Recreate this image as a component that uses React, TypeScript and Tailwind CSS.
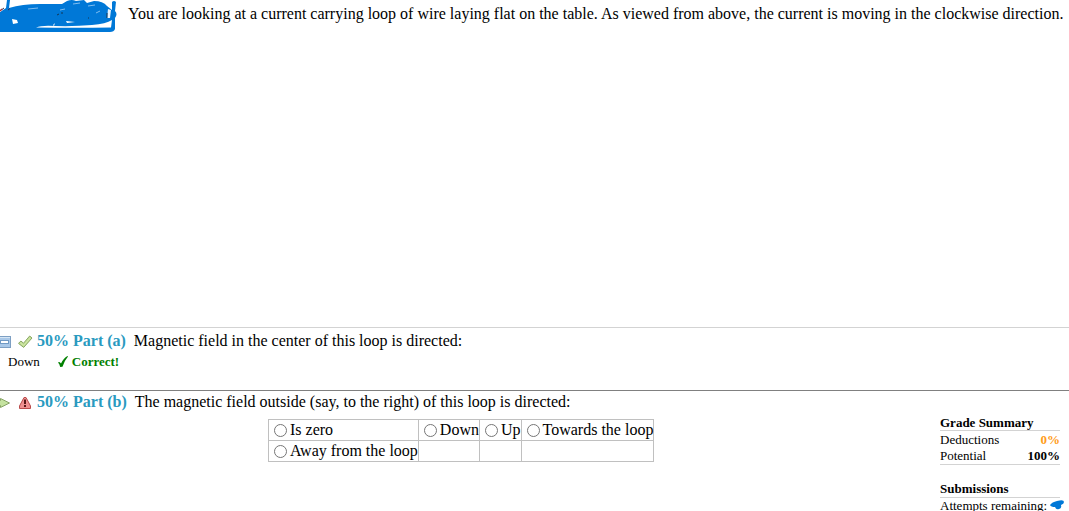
import type { ReactNode } from "react";

function Scribble() {
  return (
    <svg className="block shrink-0" width="120" height="34" viewBox="0 0 120 34" aria-hidden="true">
      <path
        d="M0 12 L6 8 L7 0 H10 L9 8 Q22 4 40 4 L62 4 L67 1 Q72 -1 76 1 L84 0 L87 3 L94 1 Q103 1 107 6 L112 10 L112 2 Q114 0 116 2 L115 11 Q118 14 115 18 L115 29 Q114 32 110 32 H0 Z"
        fill="#0078d7"
      />
      <path d="M0 7 L5 4 L5 8 L0 12Z" fill="#fff" />
      <path d="M0 11 L2 9" stroke="#b03030" strokeWidth="1.5" />
      <path d="M2 9.5 L4 8 M8 10 L10 8.5" stroke="#37304d" strokeWidth="1" />
      <path d="M12 19 L17 20 L18 23 L13 24Z M66 21 L75 22 L67 23Z M53 25 L55 23 L54 26Z" fill="#fff" />
      <path d="M36 27.5 Q42 25 55 26 Q76 26.5 92 25 Q106 24 112 20 L111 27.5 Q74 28 36 27.5Z" fill="#fff" />
      <path d="M28 9 L38 8 M73 4 L80 3 M88 6 L95 5 M60 10 L65 9 M96 13 L100 11" stroke="#7fbdf0" strokeWidth="1" />
      <path d="M108 9 L111 10 L110 18 L107 18Z" fill="#e8f4ff" />
      <path d="M107 13 V18 M57 15 L59 14 M61 13 h2 M88 18 h1" stroke="#123553" strokeWidth="1" />
    </svg>
  );
}

function MinusBoxIcon() {
  return (
    <svg className="block shrink-0" width="12" height="14" viewBox="0 0 12 14" aria-hidden="true">
      <rect x="-1.5" y="2.5" width="12" height="11" fill="#a9c8e8" stroke="#7d9fc3" />
      <path d="M0 3.5 H10" stroke="#d6e6f5" />
      <rect x="0" y="6" width="9" height="4" fill="#6f99c4" />
      <rect x="1" y="7" width="7" height="2" fill="#fff" />
    </svg>
  );
}

function CheckIcon() {
  return (
    <svg className="block shrink-0" width="16" height="14" viewBox="0 0 16 14" aria-hidden="true">
      <path d="M0.5 9.4 L2.9 7 L5.5 9.2 L11.7 2 L14 4 L5.7 13.4 Z" fill="#c3df96" stroke="#8aa765" />
      <path d="M2.5 9 L5.7 11.5 L12.3 4" fill="none" stroke="#d3e9a8" />
    </svg>
  );
}

function ArrowIcon() {
  return (
    <svg className="block shrink-0" width="12" height="14" viewBox="0 0 12 14" aria-hidden="true">
      <path d="M-1 5.5 H0.5 V3.5 L9.5 8 L0.5 12.5 V10.5 H-1 Z" fill="#c5e3a0" stroke="#86a365" strokeLinejoin="round" />
    </svg>
  );
}

function WarningIcon() {
  return (
    <svg className="block shrink-0" width="14" height="14" viewBox="0 0 14 14" aria-hidden="true">
      <path d="M6 2.5 H8 L12.5 11 V13.5 H1.5 V11 Z" fill="#ef9090" stroke="#ba4c4c" strokeLinejoin="round" />
      <path d="M7 4.5 V9 M7 10 V12" stroke="#5a1818" strokeWidth="2" />
    </svg>
  );
}

function PartHeading({ label, icons, children }: { label: string; icons: ReactNode; children: ReactNode }) {
  return (
    <h2 className="flex h-5 items-center text-[16px] leading-5">
      <span className="flex w-[37px] shrink-0 items-center gap-1.5">{icons}</span>
      <b className="text-[#2a9abf]">{label}</b>
      <span className="ml-2">{children}</span>
    </h2>
  );
}

const rows = [
  ["Is zero", "Down", "Up", "Towards the loop"],
  ["Away from the loop", "", "", ""],
];

export default function App() {
  return (
    <main className="h-screen overflow-hidden bg-white font-['Liberation_Serif',serif] text-black">
      <section className="flex h-[327px] items-start">
        <Scribble />
        <p className="ml-2 pt-1 text-[16px] leading-5 whitespace-nowrap">
          You are looking at a current carrying loop of wire laying flat on the table. As viewed from above, the current is moving in the clockwise direction.
        </p>
      </section>

      <section className="h-[63px] border-t border-[#d3d3d3] pt-[3px]">
        <PartHeading label="50% Part (a)" icons={<><MinusBoxIcon /><CheckIcon /></>}>
          Magnetic field in the center of this loop is directed:
        </PartHeading>
        <p className="flex items-center pt-px pl-2 text-[13px] leading-5">
          <span>Down</span>
          <svg className="ml-4 block" width="14" height="12" viewBox="0 0 14 12" aria-hidden="true">
            <path d="M2 6.5 Q3.500 5 5 7.5 Q7.5 2 11.5 0 L12 0.5 Q8.5 4.5 6.5 10.8 L4.2 11 Q3.5 7.5 2 6.5Z" fill="#008000" />
          </svg>
          <b className="ml-0.5 text-[#008000]">Correct!</b>
        </p>
      </section>

      <section className="border-t border-[#808080] pt-px">
        <PartHeading label="50% Part (b)" icons={<><ArrowIcon /><WarningIcon /></>}>
          The magnetic field outside (say, to the right) of this loop is directed:
        </PartHeading>
        <div className="flex items-start justify-between pt-1 pr-[9px]">
          <table className="mt-[3px] ml-[268px] border-collapse text-[16px] leading-5">
            <tbody>
              {rows.map((row, r) => (
                <tr key={r} className="h-[21px]">
                  {row.map((text, c) => (
                    <td key={c} className="border border-[#c0c0c0] p-0">
                      {text && (
                        <label className="flex items-center pl-[5px] whitespace-nowrap">
                          <input
                            type="radio"
                            name="direction"
                            value={text}
                            className="mr-[3px] size-[13px] shrink-0 appearance-none rounded-full border border-[#767676] bg-white checked:border-4 checked:border-[#0078d7]"
                          />
                          {text}
                        </label>
                      )}
                    </td>
                  ))}
                </tr>
              ))}
            </tbody>
          </table>

          <aside className="w-[120px] text-[13px] leading-4">
            <h3 className="border-b border-[#d3d3d3] text-[13px] leading-[14px] font-bold whitespace-nowrap">Grade Summary</h3>
            <dl className="border-b border-[#d3d3d3] pt-px">
              <div className="flex justify-between">
                <dt>Deductions</dt>
                <dd className="font-bold text-[#ff9c1a]">0%</dd>
              </div>
              <div className="flex justify-between">
                <dt>Potential</dt>
                <dd className="font-bold">100%</dd>
              </div>
            </dl>
            <h3 className="mt-[17px] border-b border-[#d3d3d3] pb-px text-[13px] leading-[14px] font-bold">Submissions</h3>
            <p className="flex items-center whitespace-nowrap">
              Attempts remaining:
              <svg className="block shrink-0" width="18" height="14" viewBox="0 0 18 14" aria-hidden="true">
                <path d="M3 6 Q5 3 10 2 Q17 0 17 3 Q17 5 14 6 Q15 9 12 10 Q9 11 8 8 Q4 8 3 6Z" fill="#0078d7" />
              </svg>
            </p>
          </aside>
        </div>
      </section>
    </main>
  );
}
